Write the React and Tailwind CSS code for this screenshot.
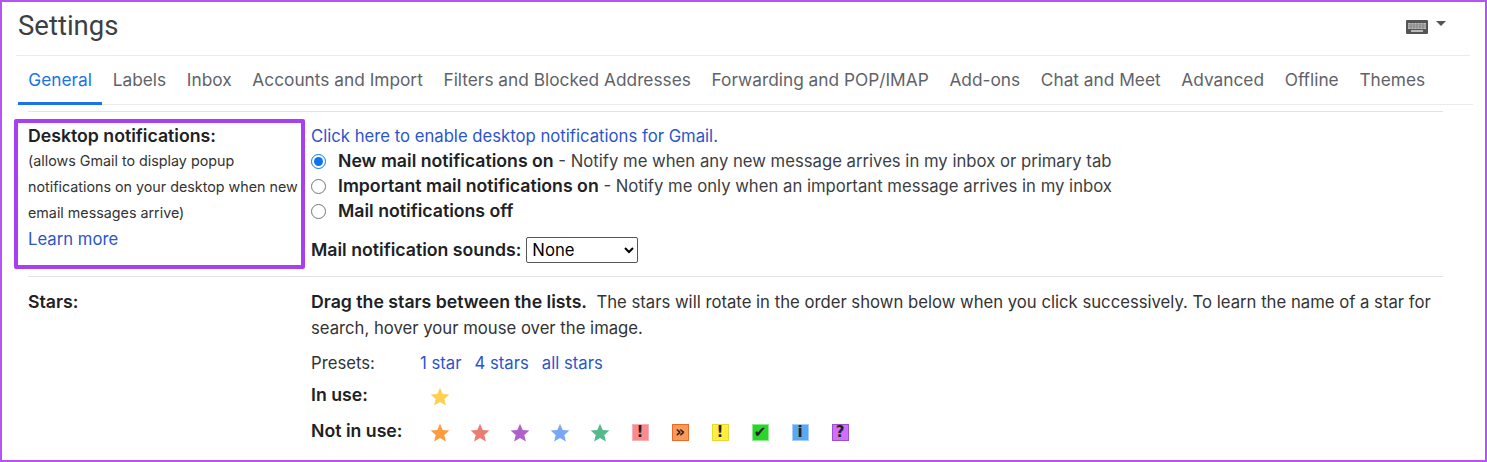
import React from 'react'

const tabs = ['General', 'Labels', 'Inbox', 'Accounts and Import', 'Filters and Blocked Addresses', 'Forwarding and POP/IMAP', 'Add-ons', 'Chat and Meet', 'Advanced', 'Offline', 'Themes']

const notInUseStars = ['#fb9c3f', '#ec7c72', '#b061c9', '#77a8f7', '#55b98a']

const Star = ({ color }) => (
  <svg width="20" height="20" viewBox="0 0 20 20" className="block mt-[4px]">
    <path d="M10 0.8l2.7 6.2 6.7.6-5.1 4.4 1.6 6.6L10 15.1l-5.9 3.5 1.6-6.6L.6 7.6l6.7-.6z" fill={color} />
  </svg>
)

const badges = [
  { bg: 'bg-[#fb8a8f]', border: 'border-[#f7b0b3]', label: '!' },
  { bg: 'bg-[#fc9a56]', border: 'border-[#ea6a2c]', label: '»' },
  { bg: 'bg-[#fff03c]', border: 'border-[#e8d83a]', label: '!' },
  { bg: 'bg-[#2bd42b]', border: 'border-[#8ee88e]', label: '✔' },
  { bg: 'bg-[#5aa6f8]', border: 'border-[#a5cffa]', label: 'i' },
  { bg: 'bg-[#cf6ffb]', border: 'border-[#9c4fd0]', label: '?' },
]

const boldText = 'font-semibold text-[17.7px] text-[#202124]'

const Radio = ({ label, desc, checked }) => (
  <label className="flex items-center h-[25px]">
    <input type="radio" name="mail" defaultChecked={checked} className="w-[15px] h-[15px] m-0 accent-[#0b74f0]" />
    <span className={`ml-[12px] ${boldText}`}>{label}</span>
    {desc && <span className="text-[#3c4043]">&nbsp;- {desc}</span>}
  </label>
)

const App = () => {
  return (
    <div className="w-[1487px] h-[462px] overflow-hidden bg-white border-2 border-[#b653f5] font-['Inter',sans-serif] text-[16.7px] text-[#333]">
      {/* title bar */}
      <div className="h-[54px] mx-[14px] w-[1454px] flex items-start justify-between border-b border-[#ebebeb]">
        <h1 className="ml-[2px] mt-[8px] text-[27.5px] leading-[32px] font-normal font-['Roboto',sans-serif] text-[#3c4043]">Settings</h1>
        <div className="flex items-start mr-[24px] mt-[18px]">
          <svg width="22" height="14" viewBox="0 0 22 14" className="block">
            <rect width="22" height="14" rx="1" fill="#555" />
            <rect x="2" y="3" width="18" height="6" fill="#bbb" />
            <path d="M2 5h18M2 7h18M5 3v6M8 3v6M11 3v6M14 3v6M17 3v6" stroke="#777" strokeWidth="0.7" />
            <rect x="5" y="10" width="12" height="2" fill="#bbb" />
          </svg>
          <div className="ml-[8px] mt-[1px] w-0 h-0 border-x-[5px] border-x-transparent border-t-[5px] border-t-[#555]" />
        </div>
      </div>

      {/* tabs */}
      <div className="h-[49px] mx-[14px] w-[1457px] pl-[2px] flex border-b border-[#ebebeb] text-[17.3px] text-[#5f6368]">
        {tabs.map((tab, i) => (
          <div
            key={tab}
            className={`h-[49px] px-[10.35px] flex items-center ${i === 0 ? 'text-[#1a73e8] border-b-[3px] border-[#1a73e8] pt-[2px]' : 'pb-[1px]'}`}
          >
            {tab}
          </div>
        ))}
      </div>

      {/* desktop notifications */}
      <div className="mt-[6px] ml-[26px] w-[1415px] h-[166px] border-t border-b border-[#e3e3e3]">
        <div className="flex pt-[7px]">
          <div className="-ml-[14px] w-[291px] h-[150px] border-[4px] border-[#a83ff0] rounded-[2px] pl-[10px]">
            <div className={`leading-[26px] ${boldText}`}>Desktop notifications:</div>
            <p className="text-[14.3px] leading-[26px] -mt-px text-[#333]">(allows Gmail to display popup<br />notifications on your desktop when new<br />email messages arrive)</p>
            <a className="block leading-[26px] text-[#2a55cc]">Learn more</a>
          </div>
          <div className="ml-[6px] pt-[5px]">
            <a className="block leading-[25px] text-[#2a55cc]">Click here to enable desktop notifications for Gmail.</a>
            <Radio checked label="New mail notifications on" desc="Notify me when any new message arrives in my inbox or primary tab" />
            <Radio label="Important mail notifications on" desc="Notify me only when an important message arrives in my inbox" />
            <Radio label="Mail notifications off" />
            <div className="mt-[13px] flex items-center">
              <span className={boldText}>Mail notification sounds:</span>
              <select className="ml-[5px] w-[112px] h-[26px] border border-[#555] rounded-[2px] pl-[1px] text-black">
                <option>None</option>
              </select>
            </div>
          </div>
        </div>
      </div>

      {/* stars */}
      <div className="ml-[26px] w-[1415px] flex pt-[12px]">
        <div className={`w-[283px] leading-[26px] ${boldText}`}>Stars:</div>
        <div className="flex-1">
          <p className="leading-[26px]"><span className={boldText}>Drag the stars between the lists.</span>&nbsp; The stars will rotate in the order shown below when you click successively. To learn the name of a star for search, hover your mouse over the image.</p>
          <div className="mt-[10px] flex h-[26px] items-center">
            <span className="w-[109px]">Presets:</span>
            <a className="text-[#2a55cc]">1 star</a>
            <a className="ml-[13px] text-[#2a55cc]">4 stars</a>
            <a className="ml-[13px] text-[#2a55cc]">all stars</a>
          </div>
          <div className="mt-[5px] flex h-[26px] items-center">
            <span className={`w-[109px] ${boldText}`}>In use:</span>
            <div className="w-[40px] flex justify-center"><Star color="#fdd04f" /></div>
          </div>
          <div className="mt-[10px] flex h-[26px] items-center">
            <span className={`w-[109px] ${boldText}`}>Not in use:</span>
            {notInUseStars.map((c) => (
              <div key={c} className="w-[40px] flex justify-center"><Star color={c} /></div>
            ))}
            {badges.map((b, i) => (
              <div key={i} className="w-[40px] flex justify-center">
                <div className={`w-[17px] h-[17px] mt-[3px] border ${b.bg} ${b.border} flex items-center justify-center text-[15px] font-bold leading-none text-[#222] font-['DejaVu_Sans',sans-serif]`}>
                  {b.label}
                </div>
              </div>
            ))}
          </div>
        </div>
      </div>
    </div>
  )
}

export default App
